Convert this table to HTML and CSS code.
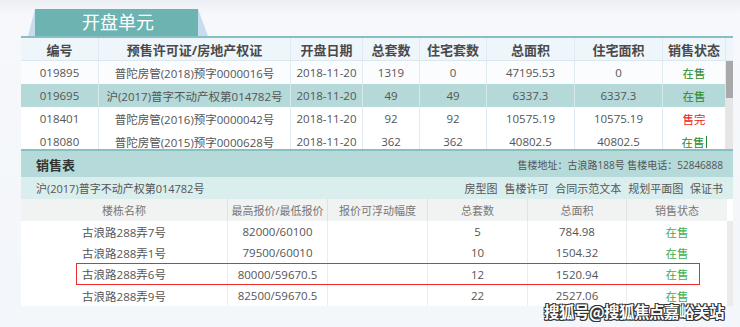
FILE: index.html
```html
<!DOCTYPE html>
<html lang="zh-CN">
<head>
  <meta charset="UTF-8">
  <title>开盘单元</title>
  <link rel="stylesheet" href="styles.css">
</head>
<body>
  <div class="page">
    <!-- Tab -->
    <div class="tabbar">
      <div class="tab-wrap">
        <div class="tab">开盘单元</div>
      </div>
    </div>

    <!-- Units table -->
    <section class="units">
      <div class="units-head row-u">
        <span>编号</span>
        <span>预售许可证/房地产权证</span>
        <span>开盘日期</span>
        <span>总套数</span>
        <span>住宅套数</span>
        <span>总面积</span>
        <span>住宅面积</span>
        <span>销售状态</span>
        <span class="gap"></span>
      </div>
      <div class="units-body">
        <div class="units-rows">
          <div class="row-u">
            <span>019895</span><span>普陀房管(2018)预字0000016号</span><span>2018-11-20</span>
            <span>1319</span><span>0</span><span>47195.53</span><span>0</span><span class="on">在售</span>
          </div>
          <div class="row-u active">
            <span>019695</span><span>沪(2017)普字不动产权第014782号</span><span>2018-11-20</span>
            <span>49</span><span>49</span><span>6337.3</span><span>6337.3</span><span class="on">在售</span>
          </div>
          <div class="row-u">
            <span>018401</span><span>普陀房管(2016)预字0000042号</span><span>2018-11-20</span>
            <span>92</span><span>92</span><span>10575.19</span><span>10575.19</span><span class="off">售完</span>
          </div>
          <div class="row-u">
            <span>018080</span><span>普陀房管(2015)预字0000628号</span><span>2018-11-20</span>
            <span>362</span><span>362</span><span>40802.5</span><span>40802.5</span><span class="on">在售<i class="caret"></i></span>
          </div>
        </div>
        <div class="scroll"><div class="thumb"></div></div>
      </div>
    </section>

    <!-- Sales table -->
    <section class="sales">
      <div class="sales-title">
        <h2>销售表</h2>
        <p>售楼地址：古浪路188号 售楼电话：52846888</p>
      </div>
      <div class="sales-sub">
        <p>沪(2017)普字不动产权第014782号</p>
        <nav>
          <a href="#">房型图</a>
          <a href="#">售楼许可</a>
          <a href="#">合同示范文本</a>
          <a href="#">规划平面图</a>
          <a href="#">保证书</a>
        </nav>
      </div>
      <div class="sales-body">
        <div class="sales-grid">
          <div class="row-s sales-head">
            <span>楼栋名称</span><span>最高报价/最低报价</span><span>报价可浮动幅度</span>
            <span>总套数</span><span>总面积</span><span>销售状态</span>
          </div>
          <div class="row-s">
            <span>古浪路288弄7号</span><span>82000/60100</span><span></span>
            <span>5</span><span>784.98</span><span class="on">在售</span>
          </div>
          <div class="row-s">
            <span>古浪路288弄1号</span><span>79500/60010</span><span></span>
            <span>10</span><span>1504.32</span><span class="on">在售</span>
          </div>
          <div class="row-s">
            <span>古浪路288弄6号</span><span>80000/59670.5</span><span></span>
            <span>12</span><span>1520.94</span><span class="on">在售</span>
          </div>
          <div class="row-s">
            <span>古浪路288弄9号</span><span>82500/59670.5</span><span></span>
            <span>22</span><span>2527.06</span><span class="on">在售</span>
          </div>
        </div>
        <div class="track"></div>
      </div>
      <div class="mark"></div>
    </section>
  </div>

  <div class="watermark">搜狐号@搜狐焦点嘉峪关站</div>
</body>
</html>
```

FILE: styles.css
```css
* {
  margin: 0;
  padding: 0;
  box-sizing: border-box;
}

body {
  font-family: 'Open Sans', 'Noto Sans CJK SC', sans-serif;
  background: linear-gradient(180deg, #eceff3 0, #f6f8fb 14px, #f3f6fa 100%);
  color: #555;
  width: 740px;
  height: 327px;
  overflow: hidden;
  position: relative;
}

.page {
  margin-left: 21px;
  width: 712px;
}

/* Tab */
.tabbar {
  height: 36px;
  padding-top: 9px;
  padding-left: 7px;
}

.tab-wrap {
  width: 180px;
  height: 27px;
  background: #c8dcef;
  clip-path: polygon(7px 0, 170px 0, 100% 100%, 0 100%);
  padding: 0 10px 0 7px;
}

.tab {
  height: 27px;
  background: #6cb3b1;
  color: #fff;
  font-size: 18px;
  line-height: 27px;
  text-align: center;
  padding-left: 3px;
}

/* Units table */
.units {
  border-top: 2px solid #86c0c0;
  background: #fafcfd;
}

.row-u {
  display: grid;
  grid-template-columns: 78px 192px 72px 57px 67px 88px 88px 63px;
  font-size: 11.5px;
  height: 23px;
  align-items: stretch;
}

.row-u span {
  display: flex;
  align-items: center;
  justify-content: center;
  border-right: 1px solid #dfeaf1;
  white-space: nowrap;
}

.units-head {
  grid-template-columns: 78px 192px 72px 57px 67px 88px 88px 63px 7px;
  height: 23px;
  background: #eef5fb;
  font-size: 13px;
  font-weight: 700;
  color: #4a4a4a;
  border-bottom: 1px solid #dbe8f0;
}

.units-head span.gap {
  border-right: none;
}

.units-body {
  display: flex;
  height: 88px;
  overflow: hidden;
}

.units-rows {
  width: 705px;
}

.units-rows .row-u {
  background: #fbfcfd;
}

.units-rows .row-u:nth-child(3),
.units-rows .row-u:nth-child(4) {
  background: #fff;
}

.units-rows .row-u.active {
  background: #b4d9d8;
}

.units-rows .row-u.active span {
  border-right-color: #d4e9e8;
}

.units-rows .row-u span.on {
  color: #2b8a2b;
}

.units-rows .row-u span.off {
  color: #f21818;
}

.caret {
  display: inline-block;
  width: 1px;
  height: 12px;
  background: #1f8a1f;
  margin-left: 1px;
}

.scroll {
  width: 7px;
  background: #e6e6e6;
}

.thumb {
  height: 37px;
  background: #a9a9a9;
}

/* Sales table */
.sales {
  border-top: 2px solid #86c0c0;
  position: relative;
}

.sales-title {
  height: 26px;
  background: #b5dad9;
  display: flex;
  justify-content: space-between;
  align-items: center;
  padding: 0 10px 0 15px;
}

.sales-title h2 {
  font-size: 13px;
  font-weight: 700;
  color: #333;
}

.sales-title p {
  font-size: 10px;
  color: #555;
}

.sales-sub {
  height: 22px;
  background: #daeeed;
  display: flex;
  justify-content: space-between;
  align-items: center;
  padding: 0 10px 0 15px;
  font-size: 11px;
}

.sales-sub nav a {
  color: #555;
  text-decoration: none;
  margin-left: 4px;
}

.sales-body {
  display: flex;
  height: 107px;
  background: #fff;
}

.sales-grid {
  width: 706px;
}

.row-s {
  display: grid;
  grid-template-columns: 207px 100px 100px 100px 99px 100px;
  height: 21.3px;
  font-size: 11.5px;
  color: #555;
}

.row-s span {
  display: flex;
  align-items: center;
  justify-content: center;
  border-right: 1px solid #ececec;
  white-space: nowrap;
}

.row-s span:last-child {
  border-right: none;
}

.row-s span.on {
  color: #41b04f;
}

.sales-head {
  height: 22px;
  background: #f1f2f2;
  font-size: 11px;
  color: #777;
}

.sales-head span {
  border-right-color: #e2e2e2;
}

.track {
  width: 6px;
  background: #ebebeb;
  margin-top: 22px;
}

/* annotation box */
.mark {
  position: absolute;
  left: 55px;
  top: 112px;
  width: 624px;
  height: 22px;
  border: 1.5px solid #ee2a2a;
}

.watermark {
  position: absolute;
  right: 16px;
  bottom: 5px;
  font-size: 15.5px;
  font-weight: 700;
  color: #fff;
  letter-spacing: -0.5px;
  font-family: 'Noto Sans CJK SC', sans-serif;
  text-shadow: 1px 1px 0 #333, -1px -1px 0 #333, 1px -1px 0 #333, -1px 1px 0 #333, 1px 0 0 #333, 0 1px 0 #333;
}
```
